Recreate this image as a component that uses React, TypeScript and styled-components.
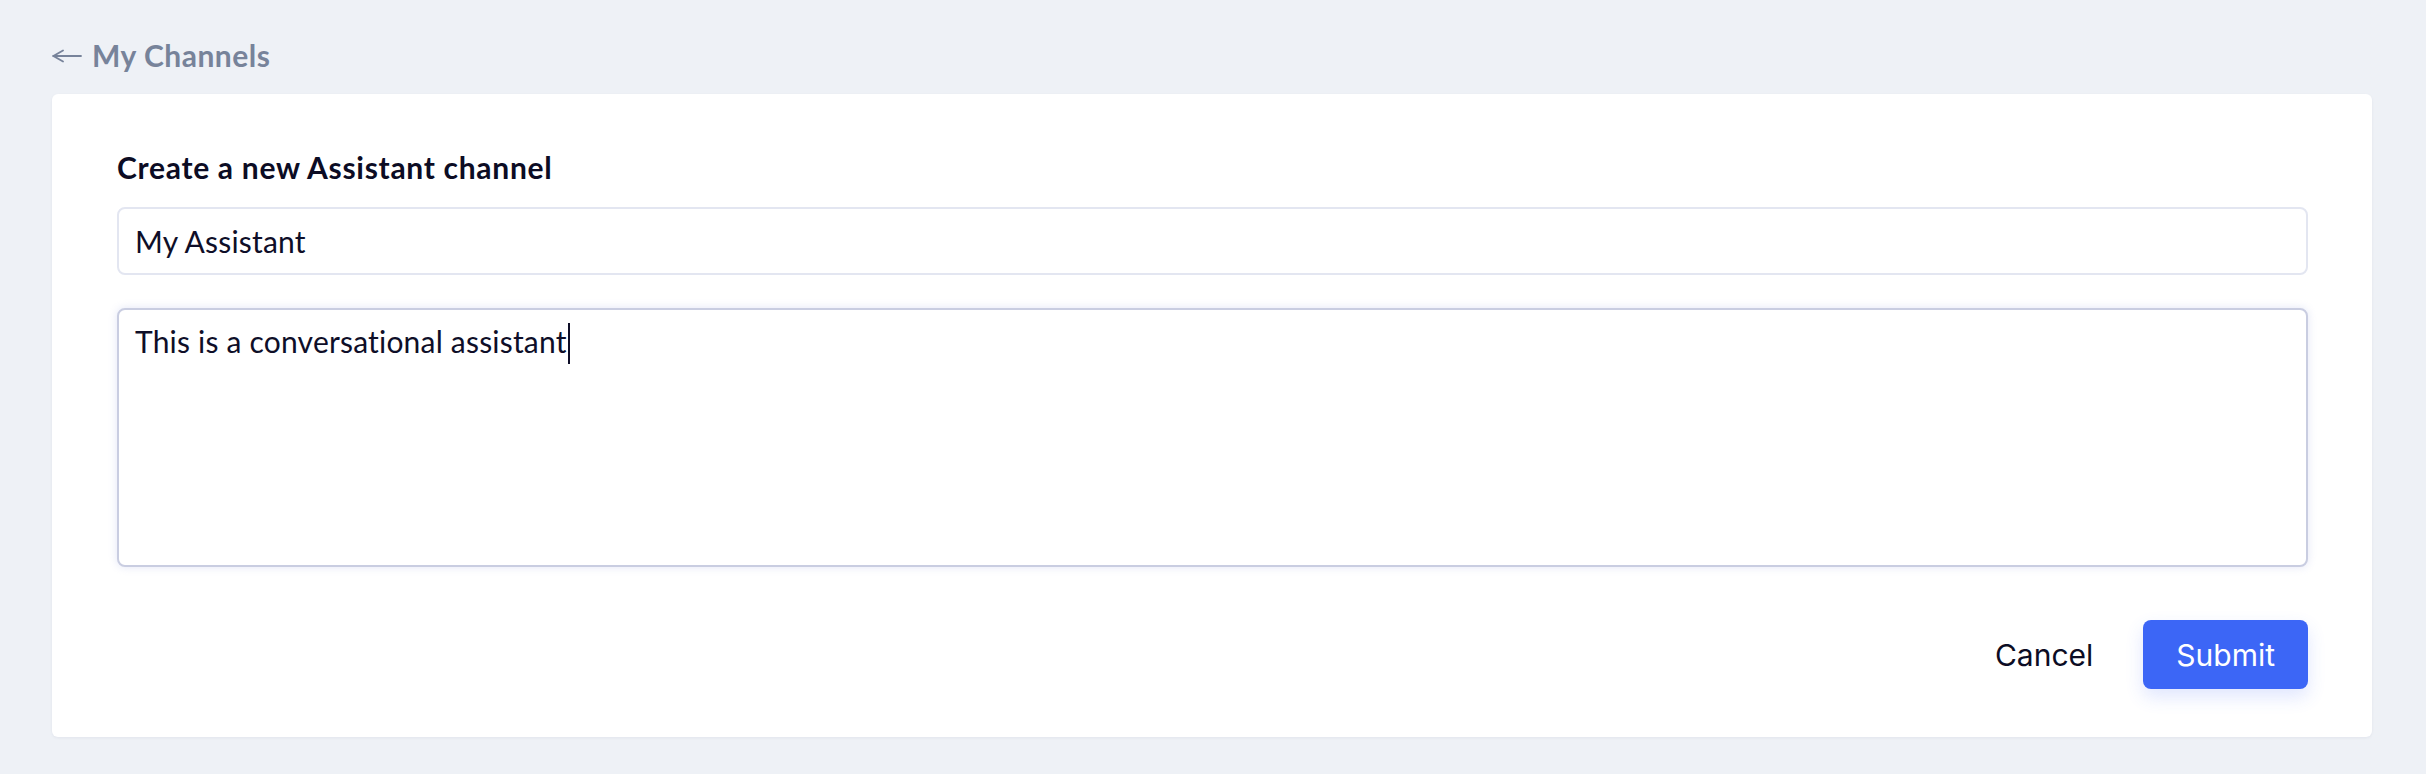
import { useEffect, useRef } from "react";
import styled, { createGlobalStyle } from "styled-components";

const GlobalStyle = createGlobalStyle`
  html, body {
    margin: 0;
    padding: 0;
    background: #eef1f6;
  }
  * {
    box-sizing: border-box;
  }
`;

const Page = styled.div`
  min-height: 774px;
  padding: 37px 54px 37px 52px;
  font-family: Lato, "Noto Sans", sans-serif;
`;

const BackLink = styled.a`
  display: inline-flex;
  align-items: center;
  gap: 10px;
  color: #77839a;
  font-size: 30px;
  font-weight: 700;
  letter-spacing: 0.5px;
  line-height: 1.2;
  text-decoration: none;
  cursor: pointer;
`;

const ArrowIcon = styled.svg`
  display: block;
  margin-top: 2px;
`;

const Card = styled.section`
  margin-top: 21px;
  background: #ffffff;
  border-radius: 6px;
  box-shadow: 0 1px 3px rgba(30, 40, 80, 0.06);
  padding: 55px 64px 48px 65px;
`;

const Form = styled.form`
  display: flex;
  flex-direction: column;
`;

const Title = styled.h2`
  margin: 0 0 22px;
  color: #0c0c24;
  font-size: 30px;
  font-weight: 700;
  letter-spacing: 0.7px;
  line-height: 1.2;
`;

const fieldText = `
  font-family: Lato, "Noto Sans", sans-serif;
  font-size: 30px;
  letter-spacing: 0.2px;
  line-height: 1.2;
`;

const TextInput = styled.input`
  ${fieldText}
  width: 100%;
  height: 68px;
  margin: 0;
  padding: 0 16px;
  color: #0e0e28;
  background: #ffffff;
  border: 2px solid #e3e6f1;
  border-radius: 8px;
  outline: none;
`;

const AreaWrap = styled.div`
  position: relative;
  margin-top: 33px;
`;

const TextArea = styled.textarea`
  ${fieldText}
  display: block;
  width: 100%;
  height: 259px;
  margin: 0;
  padding: 13px 16px;
  color: #0e0e28;
  background: #ffffff;
  border: 2px solid #c9cde1;
  border-radius: 8px;
  box-shadow: 0 0 8px rgba(190, 198, 235, 0.45);
  outline: none;
  resize: none;
  caret-color: transparent;
`;

/* mirror of the textarea text, only there to place the caret after it */
const CaretLayer = styled.div`
  ${fieldText}
  position: absolute;
  inset: 0;
  padding: 15px 18px;
  color: transparent;
  pointer-events: none;
  white-space: pre-wrap;
`;

const Caret = styled.span`
  display: inline-block;
  width: 2px;
  height: 41px;
  margin-left: 1px;
  vertical-align: -9px;
  background: #0e0e28;
`;

const Actions = styled.div`
  display: flex;
  justify-content: flex-end;
  gap: 17px;
  margin-top: 53px;
`;

const Button = styled.button<{ $primary?: boolean }>`
  height: 69px;
  padding: 0 33px;
  border: none;
  border-radius: 8px;
  font-family: Inter, "Noto Sans", sans-serif;
  font-size: 30px;
  font-weight: 400;
  cursor: pointer;
  color: ${(p) => (p.$primary ? "#ffffff" : "#0c0c24")};
  background: ${(p) => (p.$primary ? "#3c66f6" : "transparent")};
  box-shadow: ${(p) => (p.$primary ? "0 8px 18px rgba(60, 102, 246, 0.16)" : "none")};
`;

const description = "This is a conversational assistant";

const App = () => {
  const areaRef = useRef<HTMLTextAreaElement>(null);

  useEffect(() => {
    const el = areaRef.current;
    if (el) {
      el.focus();
      el.setSelectionRange(el.value.length, el.value.length);
    }
  }, []);

  return (
    <>
      <GlobalStyle />
      <Page>
        <BackLink>
          <ArrowIcon width="30" height="14" viewBox="0 0 30 14" fill="none" stroke="#77839a" strokeWidth="1.8" strokeLinecap="round">
            <path d="M29 7H1.5" />
            <path d="M11 1.5L1.5 7l9.5 5.5" />
          </ArrowIcon>
          My Channels
        </BackLink>
        <Card>
          <Form onSubmit={(e) => e.preventDefault()}>
            <Title>Create a new Assistant channel</Title>
            <TextInput defaultValue="My Assistant" />
            <AreaWrap>
              <TextArea ref={areaRef} defaultValue={description} />
              <CaretLayer>
                {description}
                <Caret />
              </CaretLayer>
            </AreaWrap>
            <Actions>
              <Button type="button">Cancel</Button>
              <Button $primary type="submit">
                Submit
              </Button>
            </Actions>
          </Form>
        </Card>
      </Page>
    </>
  );
};

export default App;
